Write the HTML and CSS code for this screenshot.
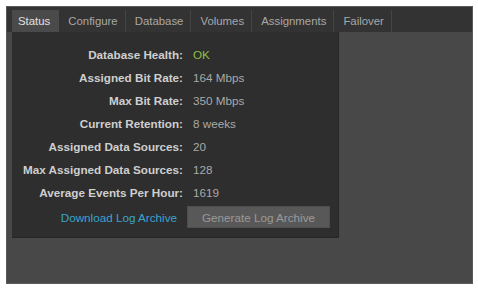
FILE: index.html
```html
<!DOCTYPE html>
<html>
<head>
<meta charset="utf-8">
<link rel="stylesheet" href="styles.css">
</head>
<body>
<div class="window">
  <div class="tabbar">
    <div class="tab active">Status</div>
    <div class="tab">Configure</div>
    <div class="tab">Database</div>
    <div class="tab">Volumes</div>
    <div class="tab">Assignments</div>
    <div class="tab">Failover</div>
  </div>
  <div class="body">
    <div class="panel">
      <div class="grid">
        <div class="label">Database Health:</div><div class="value ok">OK</div>
        <div class="label">Assigned Bit Rate:</div><div class="value">164 Mbps</div>
        <div class="label">Max Bit Rate:</div><div class="value">350 Mbps</div>
        <div class="label">Current Retention:</div><div class="value">8 weeks</div>
        <div class="label">Assigned Data Sources:</div><div class="value">20</div>
        <div class="label">Max Assigned Data Sources:</div><div class="value">128</div>
        <div class="label">Average Events Per Hour:</div><div class="value">1619</div>
      </div>
      <div class="actions">
        <a class="link" href="#">Download Log Archive</a>
        <button class="btn">Generate Log Archive</button>
      </div>
    </div>
  </div>
</div>
</body>
</html>
```
FILE: styles.css
```css
html, body {
  margin: 0;
  padding: 0;
  background: #ffffff;
}
body {
  font-family: "Liberation Sans", Arial, sans-serif;
  font-size: 11.7px;
  padding: 6px 4px 6px 6px;
}
.window {
  width: 467px;
  height: 278px;
  background: #484848;
  border: 1px solid #5a5a5a;
  box-sizing: border-box;
  display: flex;
  flex-direction: column;
}
.tabbar {
  height: 25px;
  background: #333333;
  display: flex;
  align-items: flex-end;
  padding-left: 5px;
  gap: 2px;
  font-size: 11.4px;
}
.tab {
  height: 22px;
  line-height: 22px;
  padding: 0 7px 0 7px;
  color: #a8a8a8;
  border-right: 1px solid #444;
  box-sizing: border-box;
}
.tab.active {
  background: #4a4a4a;
  color: #e2e2e2;
  border-right: none;
  padding: 0 9px 0 6px;
}
.body {
  flex: 1;
  padding-left: 5px;
}
.panel {
  width: 327px;
  background: #2e2e2e;
  border-right: 1px solid #262626;
  border-bottom: 1px solid #262626;
  box-sizing: border-box;
  padding: 11px 0 9px 0;
}
.grid {
  display: grid;
  grid-template-columns: 171px 1fr;
  column-gap: 10px;
  line-height: 23px;
}
.label {
  text-align: right;
  font-weight: bold;
  color: #cfcfcf;
  white-space: nowrap;
}
.value {
  color: #a9a9a9;
}
.value.ok {
  color: #8fc043;
}
.actions {
  display: grid;
  grid-template-columns: 165px auto;
  column-gap: 10px;
  align-items: center;
  margin-top: 2px;
}
.link {
  text-align: right;
  color: #3aa3cf;
  text-decoration: none;
  white-space: nowrap;
}
.btn {
  justify-self: start;
  width: 143px;
  height: 22px;
  background: #585858;
  border: 1px solid #4e4e4e;
  color: #9a9a9a;
  font-family: "Liberation Sans", Arial, sans-serif;
  font-size: 11.7px;
  padding: 0;
}
```
